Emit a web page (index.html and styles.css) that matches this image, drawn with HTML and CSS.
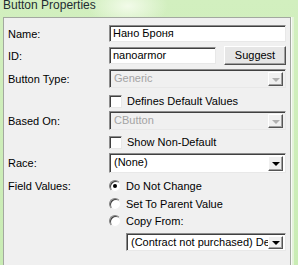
FILE: index.html
```html
<!DOCTYPE html>
<html lang="en">
<head>
    <meta charset="UTF-8">
    <link rel="stylesheet" href="styles.css">
</head>
<body>
    <div class="title"><span>Button Properties</span></div>

    <div class="panel">
        <div class="row row-name">
            <span class="label">Name:</span>
            <span class="edit wide">Нано Броня</span>
        </div>
        <div class="row row-id">
            <span class="label">ID:</span>
            <span class="edit short">nanoarmor</span>
            <span class="button">Suggest</span>
        </div>
        <div class="row row-combo">
            <span class="label">Button Type:</span>
            <span class="combo disabled">
                <span class="combo-text">Generic</span>
                <span class="drop"><span class="arrow"></span></span>
            </span>
        </div>
        <div class="row row-check">
            <span class="label"></span>
            <span class="check"></span>
            <span class="opt">Defines Default Values</span>
        </div>
        <div class="row row-based">
            <span class="label">Based On:</span>
            <span class="combo disabled">
                <span class="combo-text">CButton</span>
                <span class="drop"><span class="arrow"></span></span>
            </span>
        </div>
        <div class="row row-show">
            <span class="label"></span>
            <span class="check"></span>
            <span class="opt">Show Non-Default</span>
        </div>
        <div class="row row-race">
            <span class="label">Race:</span>
            <span class="combo tall">
                <span class="combo-text">(None)</span>
                <span class="drop"><span class="arrow"></span></span>
            </span>
        </div>
        <div class="row row-radio1">
            <span class="label">Field Values:</span>
            <span class="radio checked"></span>
            <span class="opt">Do Not Change</span>
        </div>
        <div class="row row-radio2">
            <span class="label"></span>
            <span class="radio"></span>
            <span class="opt">Set To Parent Value</span>
        </div>
        <div class="row row-radio3">
            <span class="label"></span>
            <span class="radio"></span>
            <span class="opt">Copy From:</span>
        </div>
        <div class="row row-copy">
            <span class="label indent"></span>
            <span class="combo small">
                <span class="combo-text">(Contract not purchased) Device</span>
                <span class="drop"><span class="arrow"></span></span>
            </span>
        </div>
    </div>
</body>
</html>
```

FILE: styles.css
```css
body {
    margin: 0;
    width: 298px;
    height: 265px;
    overflow: hidden;
    display: flex;
    flex-direction: column;
    font-family: 'Liberation Sans', Arial, sans-serif;
    font-size: 11px;
    color: #000;
    background: radial-gradient(ellipse 40px 22px at 128px 6px, #f2fbe9 0%, rgba(242, 251, 233, 0) 100%),
                linear-gradient(to bottom, #d2efbf, #c9ecb4);
}

.title {
    height: 17px;
    flex: none;
    padding-left: 3px;
    overflow: hidden;
}

.title span {
    display: block;
    font-size: 12px;
    line-height: 12px;
    margin-top: -1px;
    color: #1f2c33;
}

.panel {
    flex: 1;
    margin-left: 3px;
    margin-right: 7px;
    background: #f0f0f0;
    border: 1px solid #a3a8a0;
    border-bottom: none;
    box-shadow: 1px 0 0 #fafafa, 3px 0 0 #e4f3d9;
    padding: 0 4px 0 4px;
}

.row {
    display: flex;
    align-items: center;
}

.label {
    width: 101px;
    flex: none;
}

.indent {
    width: 118px;
}

.row-name { margin-top: 7px; height: 17px; }
.row-id { margin-top: 4px; height: 19px; }
.row-combo { margin-top: 4px; height: 19px; }
.row-check { margin-top: 6px; height: 14px; }
.row-based { margin-top: 3px; height: 19px; }
.row-show { margin-top: 5px; height: 14px; }
.row-race { margin-top: 4px; height: 20px; }
.row-radio1 { margin-top: 6px; height: 14px; }
.row-radio2 { margin-top: 4px; height: 14px; }
.row-radio3 { margin-top: 3px; height: 14px; }
.row-copy { margin-top: 5px; height: 18px; }

.edit {
    box-sizing: border-box;
    height: 17px;
    background: #fff;
    border: 1px solid;
    border-color: #8c8c8c #e8e8e8 #e8e8e8 #8c8c8c;
    box-shadow: inset 1px 1px 0 #404040;
    padding: 1px 0 0 3px;
    line-height: 13px;
    white-space: nowrap;
    overflow: hidden;
}

.wide {
    width: 177px;
}

.short {
    width: 107px;
}

.button {
    box-sizing: border-box;
    width: 62px;
    height: 19px;
    margin-left: 8px;
    background: #e6e6e6;
    border: 1px solid;
    border-color: #fff #505050 #505050 #fff;
    box-shadow: inset -1px -1px 0 #a0a0a0;
    text-align: center;
    line-height: 16px;
}

.combo {
    box-sizing: border-box;
    width: 177px;
    height: 19px;
    display: flex;
    align-items: stretch;
    background: #fff;
    border: 1px solid;
    border-color: #8c8c8c #e8e8e8 #e8e8e8 #8c8c8c;
    box-shadow: inset 1px 1px 0 #404040;
    padding: 2px 2px 1px 2px;
}

.combo.tall {
    height: 20px;
}

.combo.small {
    width: 160px;
    height: 18px;
}

.combo.disabled {
    background: #f0f0f0;
    color: #a3a3a3;
}

.combo-text {
    flex: 1;
    padding-left: 2px;
    line-height: 13px;
    white-space: nowrap;
    overflow: hidden;
}

.drop {
    box-sizing: border-box;
    width: 15px;
    flex: none;
    background: #f0f0f0;
    border: 1px solid;
    border-color: #fff #555 #555 #fff;
    box-shadow: inset -1px -1px 0 #a0a0a0;
    display: flex;
    align-items: center;
    justify-content: center;
}

.arrow {
    width: 0;
    height: 0;
    border-left: 4px solid transparent;
    border-right: 4px solid transparent;
    border-top: 4px solid #000;
    margin-top: 1px;
}

.disabled .arrow {
    border-top-color: #b0b0b0;
}

.check {
    box-sizing: border-box;
    width: 13px;
    height: 13px;
    flex: none;
    background: #fff;
    border: 1px solid;
    border-color: #8c8c8c #e8e8e8 #e8e8e8 #8c8c8c;
    box-shadow: inset 1px 1px 0 #404040;
}

.radio {
    box-sizing: border-box;
    width: 12px;
    height: 12px;
    flex: none;
    border-radius: 50%;
    background: #fff;
    border: 1px solid;
    border-color: #808080 #f0f0f0 #f0f0f0 #808080;
    box-shadow: inset 1px 1px 0 #404040;
    position: relative;
}

.radio.checked::after {
    content: "";
    position: absolute;
    left: 3px;
    top: 3px;
    width: 4px;
    height: 4px;
    border-radius: 50%;
    background: #000;
}

.opt {
    margin-left: 5px;
    white-space: nowrap;
}
```
